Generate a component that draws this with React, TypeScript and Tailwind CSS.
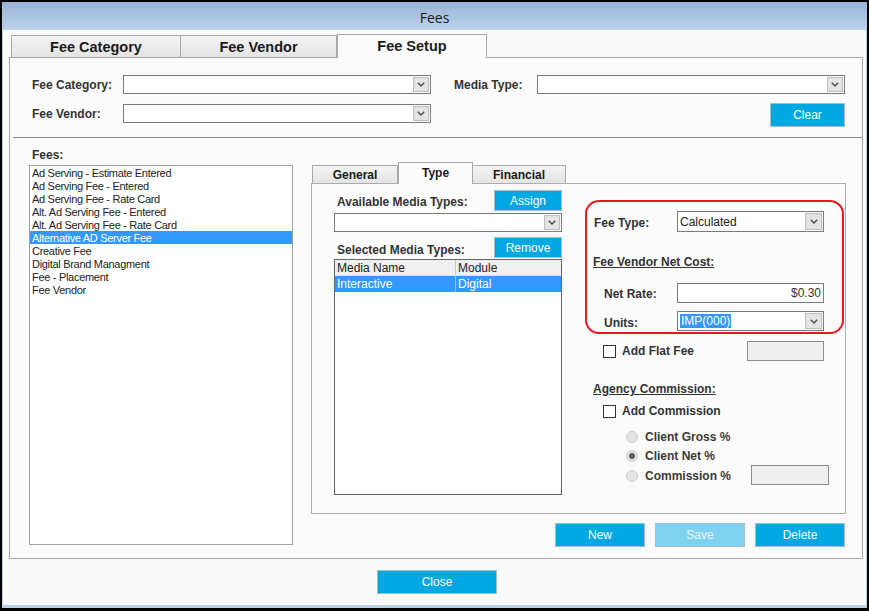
import React from "react";

const Chevron = () => (
  <svg width="8" height="5" viewBox="0 0 8 5" className="block">
    <path d="M0.8 0.8 L4 4 L7.2 0.8" fill="none" stroke="#4a4a4a" strokeWidth="1.4" />
  </svg>
);

function Sel({ cls, text, highlight, arrowCls }: { cls: string; text?: string; highlight?: boolean; arrowCls?: string }) {
  return (
    <div className={`flex bg-white border border-[#7a7a7a] ${cls}`}>
      <div className="flex-1 flex items-center pl-[2px] text-[12px] text-[#222] overflow-hidden">
        {text ? (
          highlight ? (
            <span className="bg-[#3399ff] text-white leading-[14px] px-px">{text}</span>
          ) : (
            <span className="leading-[14px]">{text}</span>
          )
        ) : null}
      </div>
      <div className={`my-px mr-px bg-[#e4e4e4] border border-[#bdbdbd] flex items-center justify-center ${arrowCls ?? "w-[16px]"}`}>
        <Chevron />
      </div>
    </div>
  );
}

function Btn({ cls, label, disabled }: { cls: string; label: string; disabled?: boolean }) {
  return (
    <div
      className={`flex items-center justify-center border border-[#a7bcc7] text-[12px] ${
        disabled ? "bg-[#80d3f0] text-[#e9f7fc]" : "bg-[#00a8e1] text-white"
      } ${cls}`}
    >
      {label}
    </div>
  );
}

const Check = () => <div className="w-[13px] h-[13px] border border-[#333] bg-white shrink-0" />;

function Radio({ checked }: { checked?: boolean }) {
  return (
    <div className="w-[12px] h-[12px] rounded-full bg-[#e4e4e4] border border-[#cbcbcb] flex items-center justify-center shrink-0">
      {checked ? <div className="w-[6px] h-[6px] rounded-full bg-[#5e5e5e]" /> : null}
    </div>
  );
}

const fees = [
  "Ad Serving - Estimate Entered",
  "Ad Serving Fee - Entered",
  "Ad Serving Fee - Rate Card",
  "Alt. Ad Serving Fee - Entered",
  "Alt. Ad Serving Fee - Rate Card",
  "Alternative AD Server Fee",
  "Creative Fee",
  "Digital Brand Managment",
  "Fee - Placement",
  "Fee Vendor",
];

export default function App() {
  return (
    <div
      className="w-[869px] h-[611px] bg-black pt-[2px] px-[2px] pb-[3px] flex flex-col"
      style={{ fontFamily: '"Liberation Sans", Arial, sans-serif' }}
    >
      {/* Title bar */}
      <div
        className="h-[28px] shrink-0 bg-gradient-to-b from-[#98b4d4] to-[#bad2eb] flex items-center justify-center pt-[3px] text-[14px] text-[#1e1e1e]"
        style={{ fontFamily: '"Open Sans", "Noto Sans", sans-serif' }}
      >
        Fees
      </div>

      {/* Body */}
      <div className="flex-1 bg-[#fafafa] border-x border-b-[3px] border-[#b9d1ea] flex flex-col">
        {/* Main tabs */}
        <div className="mt-[4px] ml-[8px] flex items-end h-[24px]">
          <div className="w-[170px] h-[22px] mb-px pt-[2px] bg-gradient-to-b from-[#f4f4f4] to-[#e4e4e4] border border-b-0 border-[#a9a9a9] flex items-center justify-center text-[14.5px] font-bold text-[#1a1a1a]">
            Fee Category
          </div>
          <div className="w-[156px] h-[22px] mb-px pt-[2px] bg-gradient-to-b from-[#f4f4f4] to-[#e4e4e4] border border-b-0 border-l-0 border-[#a9a9a9] flex items-center justify-center text-[14.5px] font-bold text-[#1a1a1a]">
            Fee Vendor
          </div>
          <div className="relative z-10 w-[150px] h-[24px] bg-[#fcfcfc] border border-b-0 border-[#a9a9a9] flex items-start pt-[1px] justify-center text-[14.5px] font-bold text-[#1a1a1a]">
            Fee Setup
          </div>
        </div>

        {/* Main panel */}
        <div className="-mt-px ml-[6px] w-[854px] h-[502px] border border-[#a5a5a5] bg-[#fbfbfb] flex flex-col">
          <div className="pt-[17px] pl-[22px]">
            {/* Row 1 */}
            <div className="flex items-center h-[19px]">
              <div className="w-[91px] pt-px text-[12px] font-bold text-[#333]">Fee Category:</div>
              <Sel cls="w-[308px] h-[19px]" />
              <div className="ml-[23px] w-[83px] pt-px text-[12px] font-bold text-[#333]">Media Type:</div>
              <Sel cls="w-[308px] h-[19px]" />
            </div>
            {/* Row 2 */}
            <div className="mt-[9px] w-[813px] flex items-start">
              <div className="mt-px h-[19px] w-[91px] pt-px flex items-center text-[12px] font-bold text-[#333]">Fee Vendor:</div>
              <div className="mt-px">
                <Sel cls="w-[308px] h-[19px]" />
              </div>
              <Btn cls="ml-auto w-[75px] h-[24px]" label="Clear" />
            </div>
          </div>

          {/* Separator */}
          <div className="mt-[10px] ml-[3px] h-px bg-[#8a8a8a]" />

          {/* Lower */}
          <div className="mt-[9px] pl-[19px] flex">
            {/* Left list */}
            <div className="w-[264px] flex flex-col">
              <div className="pl-[3px] h-[14px] leading-[16px] text-[12px] font-bold text-[#333]">Fees:</div>
              <div className="mt-[4px] h-[380px] border border-[#a0a0a0] bg-white">
                {fees.map((f, i) => (
                  <div
                    key={f}
                    className={`h-[13px] leading-[14px] pl-[2px] text-[11px] tracking-[-0.3px] ${
                      i === 5 ? "bg-[#3399ff] text-white" : "text-[#222]"
                    }`}
                  >
                    {f}
                  </div>
                ))}
              </div>
            </div>

            {/* Right column */}
            <div className="ml-[18px] w-[535px] pt-[15px] flex flex-col">
              {/* inner tabs */}
              <div className="ml-px flex items-end h-[22px]">
                <div className="w-[86px] h-[18px] mb-px bg-gradient-to-b from-[#f4f4f4] to-[#e4e4e4] border border-b-0 border-[#a9a9a9] flex items-center justify-center text-[12px] font-bold text-[#1a1a1a]">
                  General
                </div>
                <div className="relative z-10 w-[75px] h-[22px] bg-[#fcfcfc] border border-b-0 border-[#a9a9a9] flex items-start pt-[1px] justify-center text-[12px] font-bold text-[#1a1a1a]">
                  Type
                </div>
                <div className="w-[93px] h-[18px] mb-px bg-gradient-to-b from-[#f4f4f4] to-[#e4e4e4] border border-b-0 border-l-0 border-[#a9a9a9] flex items-center justify-center text-[12px] font-bold text-[#1a1a1a]">
                  Financial
                </div>
              </div>

              {/* inner panel */}
              <div className="-mt-px h-[331px] border border-[#adadad] bg-[#fcfcfc] flex pl-[22px]">
                {/* left sub */}
                <div className="w-[228px] flex flex-col">
                  <div className="mt-[6px] flex items-center justify-between h-[21px]">
                    <div className="pl-[3px] pt-[3px] text-[12px] font-bold text-[#333]">Available Media Types:</div>
                    <Btn cls="w-[68px] h-[21px]" label="Assign" />
                  </div>
                  <div className="mt-[2px]">
                    <Sel cls="w-[228px] h-[19px]" />
                  </div>
                  <div className="mt-[5px] flex items-center justify-between h-[21px]">
                    <div className="pl-[3px] pt-[4px] text-[12px] font-bold text-[#333]">Selected Media Types:</div>
                    <Btn cls="w-[68px] h-[21px]" label="Remove" />
                  </div>
                  <div className="mt-px h-[236px] border border-[#646464] bg-white flex flex-col">
                    <div className="h-[16px] flex bg-[#f0f0f0] border-b border-[#e0e0e0] text-[12px] text-[#222]">
                      <div className="w-[121px] border-r border-[#c8c8c8] pl-[2px] leading-[16px]">Media Name</div>
                      <div className="flex-1 pl-[2px] leading-[16px]">Module</div>
                    </div>
                    <div className="h-[16px] flex bg-[#3399ff] text-[12px] text-white">
                      <div className="w-[121px] border-r border-[#8cc2f5] pl-[2px] leading-[16px]">Interactive</div>
                      <div className="flex-1 pl-[2px] leading-[16px]">Digital</div>
                    </div>
                  </div>
                </div>

                {/* right sub */}
                <div className="ml-[23px] w-[259px] flex flex-col">
                  <div className="mt-[16px] h-[134px] w-[259px] border-2 border-[#e8161e] rounded-[14px] flex flex-col">
                    <div className="mt-[9px] flex items-center h-[21px]">
                      <div className="pl-[7px] w-[90px] pt-[2px] text-[12px] font-bold text-[#333]">Fee Type:</div>
                      <Sel cls="w-[147px] h-[21px]" text="Calculated" arrowCls="w-[17px]" />
                    </div>
                    <div className="mt-[23px] pl-[6px] h-[14px] leading-[15px] text-[12px] font-bold text-[#333] underline">
                      Fee Vendor Net Cost:
                    </div>
                    <div className="mt-[14px] flex items-center h-[20px]">
                      <div className="pl-[17px] w-[90px] pt-px text-[12px] font-bold text-[#333]">Net Rate:</div>
                      <div className="w-[147px] h-[20px] border border-[#7a7a7a] bg-white flex items-center justify-end pr-[2px] text-[12px] text-[#333]">
                        $0.30
                      </div>
                    </div>
                    <div className="mt-[8px] flex items-center h-[20px]">
                      <div className="pl-[17px] w-[90px] pt-[3px] text-[12px] font-bold text-[#333]">Units:</div>
                      <Sel cls="w-[147px] h-[20px]" text="IMP(000)" highlight arrowCls="w-[17px]" />
                    </div>
                  </div>

                  <div className="mt-[7px] w-[239px] flex items-center h-[20px]">
                    <div className="ml-[18px]">
                      <Check />
                    </div>
                    <div className="ml-[6px] text-[12px] font-bold text-[#333]">Add Flat Fee</div>
                    <div className="ml-auto w-[77px] h-[20px] border border-[#8c8c8c] bg-[#efefef]" />
                  </div>

                  <div className="mt-[21px] pl-[8px] h-[14px] leading-[15px] text-[12px] font-bold text-[#333] underline">
                    Agency Commission:
                  </div>

                  <div className="mt-[8px] flex items-center h-[14px]">
                    <div className="ml-[18px]">
                      <Check />
                    </div>
                    <div className="ml-[6px] text-[12px] font-bold text-[#333]">Add Commission</div>
                  </div>

                  <div className="mt-[9px] flex items-center h-[19px]">
                    <div className="ml-[41px]">
                      <Radio />
                    </div>
                    <div className="ml-[7px] text-[12px] font-bold text-[#3a3a3a]">Client Gross %</div>
                  </div>
                  <div className="flex items-center h-[20px]">
                    <div className="ml-[41px]">
                      <Radio checked />
                    </div>
                    <div className="ml-[7px] text-[12px] font-bold text-[#3a3a3a]">Client Net %</div>
                  </div>
                  <div className="w-[244px] flex items-center h-[20px]">
                    <div className="ml-[41px]">
                      <Radio />
                    </div>
                    <div className="ml-[7px] text-[12px] font-bold text-[#3a3a3a]">Commission %</div>
                    <div className="ml-auto -mt-[2px] w-[78px] h-[20px] border border-[#8c8c8c] bg-[#efefef]" />
                  </div>
                </div>
              </div>

              {/* Buttons */}
              <div className="mt-[9px] pr-px flex justify-end gap-[10px]">
                <Btn cls="w-[90px] h-[24px]" label="New" />
                <Btn cls="w-[90px] h-[24px]" label="Save" disabled />
                <Btn cls="w-[90px] h-[24px]" label="Delete" />
              </div>
            </div>
          </div>
        </div>

        {/* Close */}
        <div className="mt-[11px] ml-[374px]">
          <Btn cls="w-[120px] h-[24px]" label="Close" />
        </div>
      </div>
    </div>
  );
}
